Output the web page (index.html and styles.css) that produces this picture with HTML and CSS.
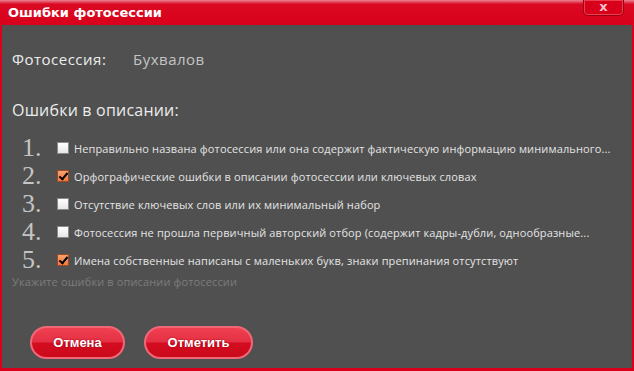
FILE: index.html
```html
<!DOCTYPE html>
<html lang="ru">
<head>
    <meta charset="UTF-8">
    <title>Ошибки фотосессии</title>
    <link rel="stylesheet" href="styles.css">
</head>
<body>
    <div class="dialog">
        <div class="titlebar">
            <span class="title">Ошибки фотосессии</span>
            <span class="close">x</span>
        </div>
        <div class="content">
            <div class="session">
                <span class="session-label">Фотосессия:</span>
                <span class="session-name">Бухвалов</span>
            </div>
            <h2>Ошибки в описании:</h2>
            <ol class="errors">
                <li><span class="num">1.</span><span class="check"></span><span class="text">Неправильно названа фотосессия или она содержит фактическую информацию минимального...</span></li>
                <li><span class="num">2.</span><span class="check checked"></span><span class="text">Орфографические ошибки в описании фотосессии или ключевых словах</span></li>
                <li><span class="num">3.</span><span class="check"></span><span class="text">Отсутствие ключевых слов или их минимальный набор</span></li>
                <li><span class="num">4.</span><span class="check"></span><span class="text">Фотосессия не прошла первичный авторский отбор (содержит кадры-дубли, однообразные...</span></li>
                <li><span class="num">5.</span><span class="check checked"></span><span class="text">Имена собственные написаны с маленьких букв, знаки препинания отсутствуют</span></li>
            </ol>
            <p class="hint">Укажите ошибки в описании фотосессии</p>
            <div class="buttons">
                <button class="btn cancel">Отмена</button>
                <button class="btn mark">Отметить</button>
            </div>
        </div>
    </div>
</body>
</html>
```

FILE: styles.css
```css
body {
    margin: 0;
    background-color: #505050;
    font-family: 'Open Sans', sans-serif;
}
.dialog {
    width: 634px;
    height: 371px;
    display: flex;
    flex-direction: column;
}
.titlebar {
    height: 25px;
    flex: none;
    display: flex;
    justify-content: space-between;
    align-items: flex-start;
    background: linear-gradient(to bottom, #ee8090 0px, #e24a60 2px, #da0a22 4px, #d9001c 100%);
}
.title {
    padding: 5px 0 0 8px;
    font-family: 'DejaVu Sans', sans-serif;
    font-weight: bold;
    font-size: 13px;
    color: #ffffff;
}
.close {
    width: 39px;
    height: 15px;
    margin-right: 10px;
    border: 1px solid #9a0014;
    border-top: none;
    border-radius: 0 0 5px 5px;
    box-shadow: inset 0 0 0 1px #e8404f;
    background: #d9001c;
    color: #f4c0c8;
    font-family: 'DejaVu Sans', sans-serif;
    font-weight: bold;
    font-size: 13px;
    line-height: 13px;
    text-align: center;
}
.content {
    flex: 1;
    border-left: 2px solid #d9001c;
    border-right: 2px solid #d9001c;
    border-bottom: 3px solid #d9001c;
    padding: 24px 0 0 10px;
}
.session {
    display: flex;
    font-size: 15px;
    line-height: 20px;
    letter-spacing: 0.5px;
}
.session-label {
    width: 121px;
    color: #ececec;
}
.session-name {
    color: #c4c4c4;
}
h2 {
    margin: 30px 0 0;
    font-weight: normal;
    font-size: 16px;
    line-height: 22px;
    letter-spacing: 0.2px;
    color: #ececec;
}
.errors {
    list-style: none;
    margin: 13px 0 0;
    padding: 0 0 0 10px;
}
.errors li {
    height: 28px;
    display: flex;
    align-items: center;
}
.num {
    width: 35px;
    font-family: 'Liberation Serif', serif;
    font-size: 26px;
    line-height: 28px;
    color: #c4c4c4;
}
.check {
    width: 10px;
    height: 10px;
    margin-right: 5px;
    border: 1px solid #8a8a8a;
    background: linear-gradient(to bottom, #ffffff, #e6e6e6);
    position: relative;
}
.check.checked {
    border-color: #a04a20;
    background: linear-gradient(to bottom, #f8a070, #f07a40);
}
.check.checked::after {
    content: "";
    position: absolute;
    left: 3px;
    top: 0px;
    width: 3px;
    height: 7px;
    border-right: 2px solid #000000;
    border-bottom: 2px solid #000000;
    transform: rotate(40deg);
}
.text {
    font-size: 11px;
    letter-spacing: 0.13px;
    color: #e4e4e4;
    white-space: nowrap;
}
.hint {
    margin: 1px 0 0;
    font-size: 11px;
    line-height: 14px;
    letter-spacing: 0.13px;
    color: #7c7c7c;
}
.buttons {
    display: flex;
    gap: 19px;
    margin: 37px 0 0 18px;
}
.btn {
    height: 33px;
    padding: 0;
    border: 2px solid #f06878;
    border-radius: 17px;
    background: linear-gradient(to bottom, #f04050 0%, #e43044 48%, #d40c20 52%, #cc0a1c 100%);
    color: #ffffff;
    font-family: 'Liberation Sans', sans-serif;
    font-weight: bold;
    font-size: 13px;
    text-shadow: 0 0 2px #900010;
}
.cancel {
    width: 95px;
}
.mark {
    width: 109px;
}
```
